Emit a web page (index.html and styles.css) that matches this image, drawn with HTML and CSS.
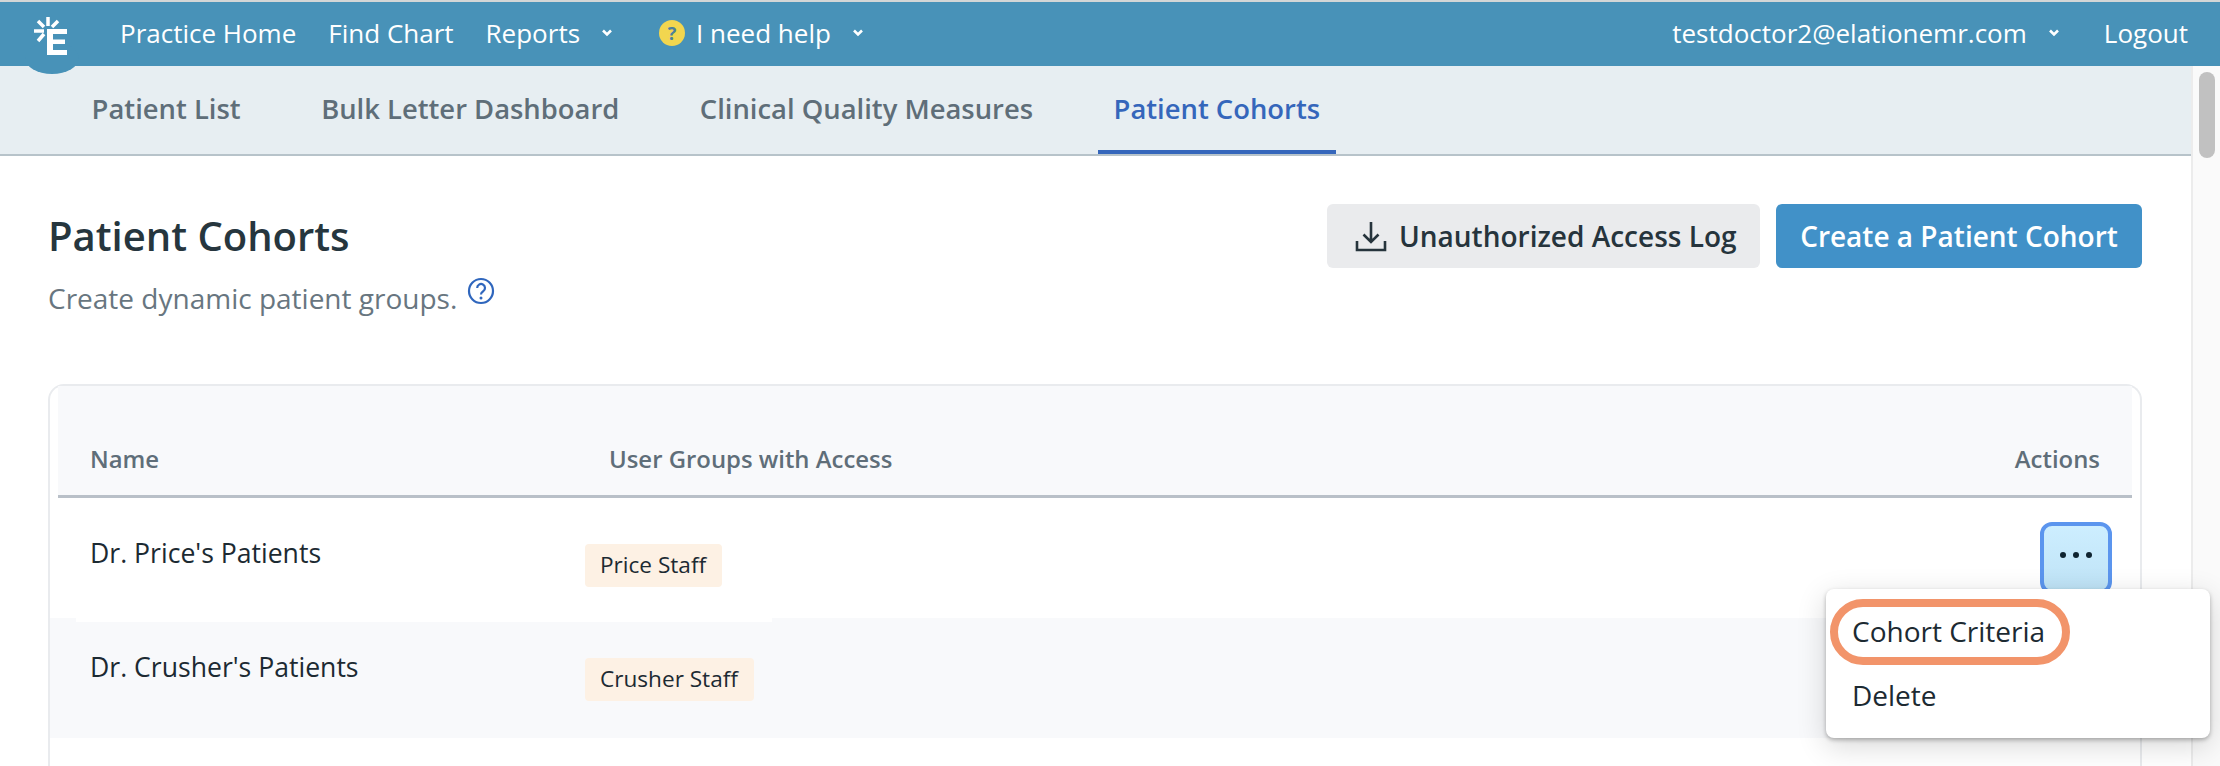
FILE: index.html
```html
<!DOCTYPE html>
<html lang="en">
<head>
<meta charset="utf-8">
<title>Patient Cohorts</title>
<link rel="stylesheet" href="styles.css">
</head>
<body>
<header class="topbar">
  <a class="logo" aria-label="Elation">
    <svg width="66" height="66" viewBox="0 0 66 66">
      <g fill="#fff">
        <rect x="19" y="3" width="6" height="26"/>
        <rect x="19" y="3" width="20" height="5"/>
        <rect x="19" y="13.500" width="18" height="4.500"/>
        <rect x="19" y="24" width="20" height="5"/>
      </g>
    </svg>
    <svg class="rays" width="30" height="30" viewBox="0 0 30 30">
      <g stroke="#fff" stroke-width="3.500" fill="none">
        <path d="M16 2v9M6 6l6 6M26 6l-6 6M2 16h10M6 26l6-7"/>
      </g>
    </svg>
  </a>
  <nav class="topnav">
    <a class="tn-home">Practice Home</a>
    <a class="tn-find">Find Chart</a>
    <a class="tn-rep">Reports<svg class="chev" width="12" height="8" viewBox="0 0 12 8"><path d="M2 1.500l4 4 4-4" fill="none" stroke="#fff" stroke-width="2.600"/></svg></a>
    <a class="tn-help"><span class="help-dot">?</span>I need help<svg class="chev" width="12" height="8" viewBox="0 0 12 8"><path d="M2 1.500l4 4 4-4" fill="none" stroke="#fff" stroke-width="2.600"/></svg></a>
  </nav>
  <div class="topright">
    <a class="tn-user">testdoctor2@elationemr.com<svg class="chev" width="12" height="8" viewBox="0 0 12 8"><path d="M2 1.500l4 4 4-4" fill="none" stroke="#fff" stroke-width="2.600"/></svg></a>
    <a>Logout</a>
  </div>
</header>
<div class="below">
  <div class="page">
    <nav class="tabs">
      <a class="tab">Patient List</a>
      <a class="tab">Bulk Letter Dashboard</a>
      <a class="tab">Clinical Quality Measures</a>
      <a class="tab active">Patient Cohorts</a>
    </nav>
    <main class="content">
      <div class="head">
        <div class="head-text">
          <h1>Patient Cohorts</h1>
          <p class="sub">Create dynamic patient groups.<svg class="q" width="28" height="28" viewBox="0 0 28 28"><circle cx="14" cy="14" r="12" fill="none" stroke="#2f66bd" stroke-width="2.200"/><path d="M10.200 11a3.900 3.900 0 1 1 6 3.200c-1.400.9-2.200 1.500-2.200 3.200" fill="none" stroke="#2f66bd" stroke-width="2.200"/><circle cx="14" cy="21" r="1.500" fill="#2f66bd"/></svg></p>
        </div>
        <div class="head-actions">
          <button class="btn grey"><svg width="32" height="32" viewBox="0 0 32 32"><path d="M16 2v20M8.500 14.500L16 22l7.500-7.500M2 21v9h28v-9" fill="none" stroke="#26343c" stroke-width="2.600"/></svg>Unauthorized Access Log</button>
          <button class="btn blue">Create a Patient Cohort</button>
        </div>
      </div>
      <section class="card">
        <div class="thead">
          <div class="th-name">Name</div>
          <div class="th-groups">User Groups with Access</div>
          <div class="th-actions">Actions</div>
        </div>
        <div class="row first">
          <div class="name">Dr. Price's Patients</div>
          <div class="groups"><span class="tag">Price Staff</span></div>
          <div class="actions">
            <button class="more" aria-label="More"><i></i><i></i><i></i></button>
            <div class="menu">
              <div class="mi hi">Cohort Criteria</div>
              <div class="mi">Delete</div>
            </div>
          </div>
        </div>
        <div class="row alt">
          <div class="name">Dr. Crusher's Patients</div>
          <div class="groups"><span class="tag">Crusher Staff</span></div>
          <div class="actions"></div>
        </div>
      </section>
    </main>
  </div>
  <aside class="scroll"><div class="thumb"></div></aside>
</div>
</body>
</html>
```
FILE: styles.css
```css
* { box-sizing: border-box; }
html, body { margin: 0; height: 766px; overflow: hidden; }
body { font-family: "Open Sans", "Noto Sans", sans-serif; color: #1c2a32; background: #fff; }

.topbar {
  height: 66px; border-top: 2px solid #d3d6d6; background: #4892b8; color: #fff;
  display: flex; align-items: center; justify-content: space-between;
  font-size: 26px; padding: 0 32px 2px 120px; position: relative; z-index: 2;
}
.logo { position: absolute; left: 18px; top: 8px; width: 66px; height: 66px; }
.logo::before { content: ""; position: absolute; left: 7px; top: 32px; width: 54px; height: 32px; border-radius: 50%; background: #4892b8; }
.logo svg { position: absolute; left: 10px; top: 16px; }
.logo .rays { left: 14px; top: 5px; }
.topnav, .topright { display: flex; align-items: center; }
.topnav a, .topright a { display: flex; align-items: center; white-space: nowrap; }
.chev { margin-left: 21px; }
.tn-home { margin-right: 32px; }
.tn-find { margin-right: 32px; }
.tn-rep { margin-right: 46px; }
.help-dot {
  width: 26px; height: 26px; border-radius: 50%; background: #f2d64f; color: #4b7f9c;
  font-size: 18px; font-weight: 700; display: flex; align-items: center; justify-content: center; margin-right: 11px;
}
.tn-user { margin-right: 44px; }
.topright .chev { margin-left: 21px; }

.below { display: flex; height: 700px; }
.page { flex: 1; min-width: 0; }
.scroll { width: 29px; background: #fafafa; border-left: 2px solid #ececec; padding: 6px 5px 0 6px; }
.thumb { height: 86px; background: #c1c1c1; border-radius: 9px; }

.tabs {
  height: 90px; background: #e7eef2; border-bottom: 2px solid #b7c3ca;
  display: flex; gap: 48.5px; padding-left: 75.6px;
}
.tab {
  height: 88px; padding: 0 16px 3px; display: flex; align-items: center;
  font-size: 27.4px; font-weight: 600; color: #5f6e79; white-space: nowrap;
}
.tab.active { color: #3566bb; border-bottom: 4px solid #3566bb; padding-bottom: 0; }

.content { padding: 48px 49px 0 48px; }
.head { display: flex; justify-content: space-between; height: 180px; }
h1 { margin: 0; font-size: 40px; font-weight: 600; line-height: 50px; color: #26363e; padding-top: 7px; }
.sub { margin: 18px 0 0 0; font-size: 28px; line-height: 38px; color: #687680; display: flex; align-items: flex-start; white-space: nowrap; }
.q { margin-left: 10px; margin-top: -2px; }
.head-actions { display: flex; gap: 16px; align-items: flex-start; }
.btn {
  height: 64px; border: 0; border-radius: 6px; font-family: inherit; font-size: 28px; font-weight: 600;
  display: flex; align-items: center; white-space: nowrap;
}
.btn.grey { width: 433px; background: #eaebed; color: #26343c; padding: 0 0 0 28px; gap: 12px; }
.btn.blue { width: 366px; background: #4191c8; color: #fff; justify-content: center; }

.card {
  width: 2094px; height: 500px; border: 2px solid #e9ebee; border-bottom: 0;
  border-radius: 16px 16px 0 0;
}
.thead {
  margin: 0 8px; height: 112px; background: #f8f9fb; border-bottom: 3px solid #b9c0c8;
  display: grid; grid-template-columns: 551px 1fr 160px; align-items: end; padding-bottom: 20px;
  font-size: 23.9px; font-weight: 600; color: #5f6e79;
}
.th-name { padding-left: 32px; }
.th-actions { text-align: right; padding-right: 32px; }
.row { display: grid; grid-template-columns: 535px 1fr 200px; position: relative; }
.row.first { height: 120px; }
.row.alt { height: 120px; background: #f8f9fb; }
.row.alt::before { content: ""; position: absolute; left: 26px; top: 0; width: 696px; height: 4px; background: #fff; }
.name { font-size: 26.6px; padding-left: 40px; line-height: 34px; }
.first .name { padding-top: 38px; }
.alt .name { padding-top: 32px; }
.first .groups { padding-top: 46px; }
.alt .groups { padding-top: 40px; }
.tag {
  display: inline-block; height: 43px; line-height: 42px; padding: 0 16px 0 15px; border-radius: 4px;
  background: #fdf1e4; font-size: 22.6px; color: #1c2a32; white-space: nowrap;
}
.actions { position: relative; }
.more {
  position: absolute; left: 100px; top: 24px; width: 72px; height: 72px; border: 4px solid #5b95ee; border-radius: 12px;
  background: linear-gradient(#cdeeff, #bfe3f6); display: flex; align-items: center; justify-content: center; gap: 7px; padding: 0;
}
.more i { width: 6px; height: 6px; border-radius: 50%; background: #0f2430; display: block; margin-top: -6px; }
.menu {
  position: absolute; left: -114px; top: 91px; width: 384px; height: 149px; background: #fff; border-radius: 8px;
  box-shadow: 0 2px 4px rgba(0,0,0,.28), 0 8px 30px rgba(0,0,0,.16); padding: 10px 4px; z-index: 5;
  font-size: 28px;
}
.mi { height: 64px; line-height: 50px; padding: 5px 0 0 22px; color: #1c2a32; }
.mi.hi { height: 66px; width: 240px; border: 8px solid #f2946a; border-radius: 33px; line-height: 48px; padding: 0 0 0 14px; }
```
